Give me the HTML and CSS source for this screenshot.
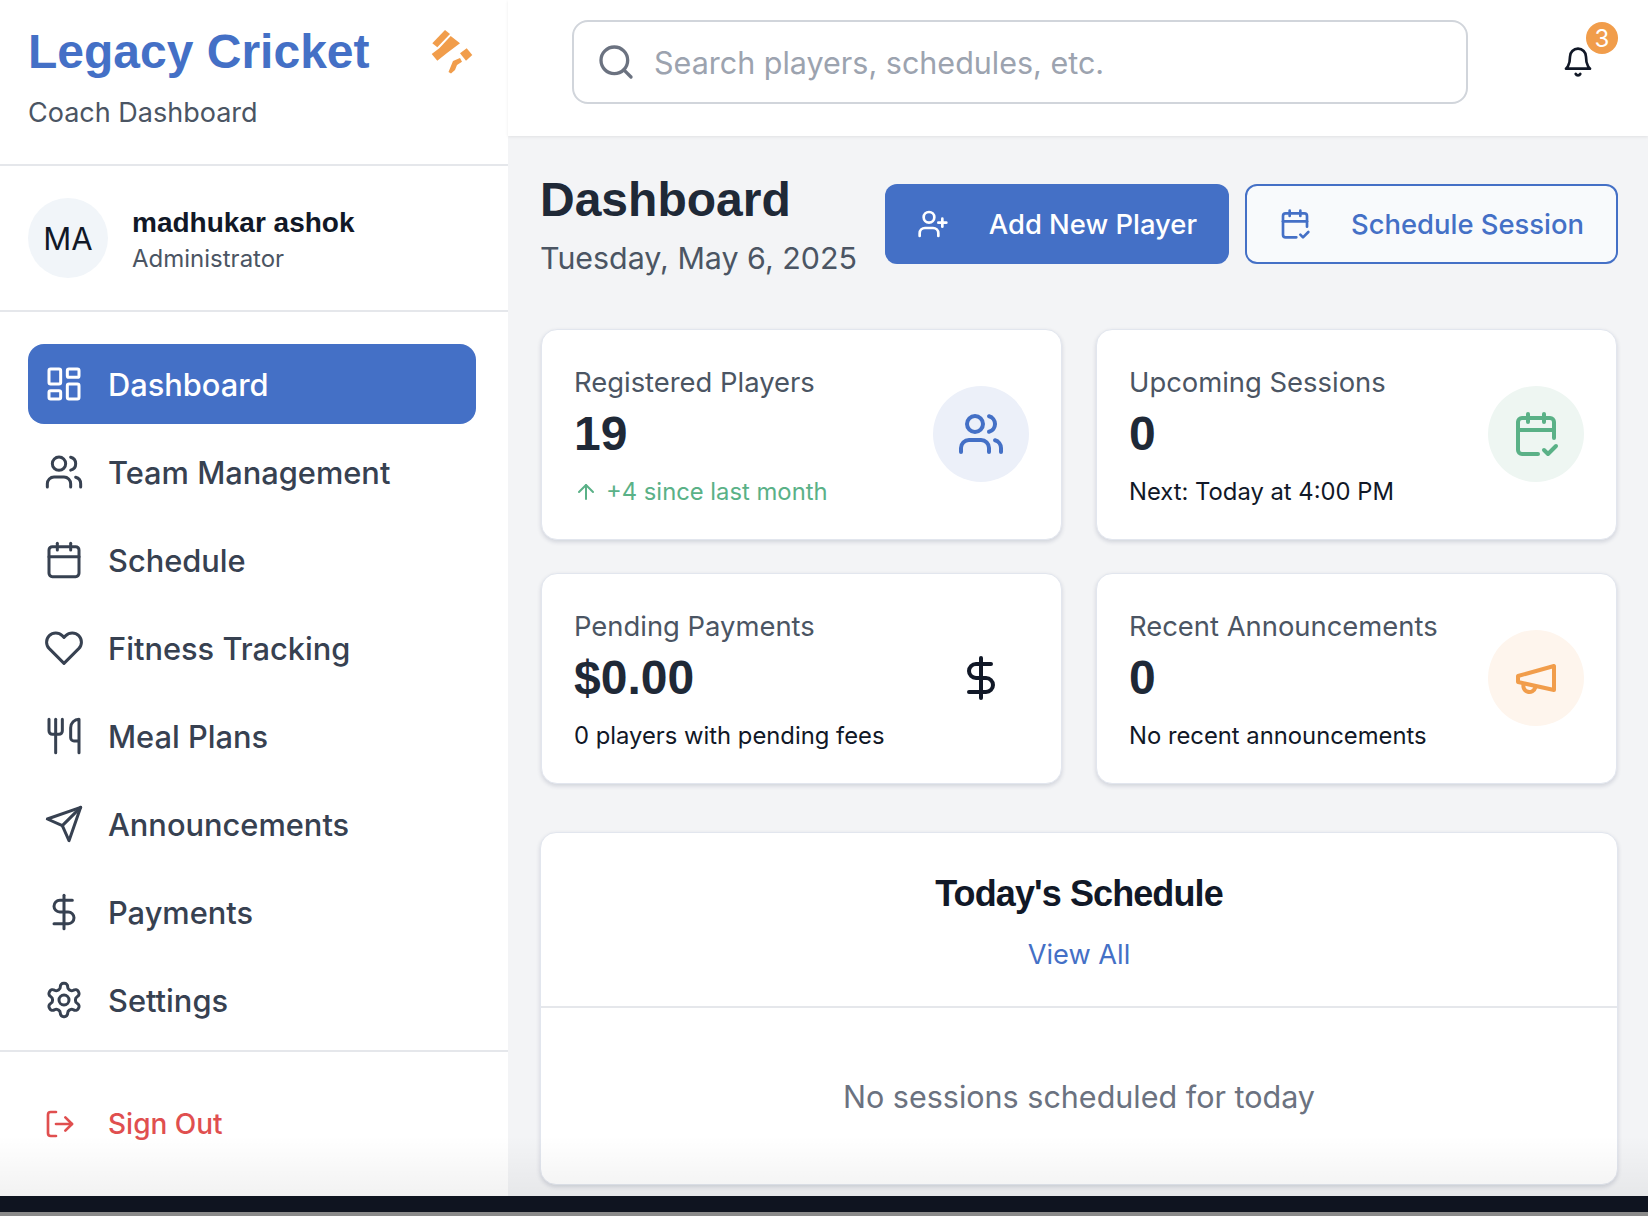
FILE: index.html

```html
<!DOCTYPE html>
<html lang="en">
<head>
  <meta charset="UTF-8" />
  <meta name="viewport" content="width=device-width, initial-scale=1.0" />
  <title>Legacy Cricket - Coach Dashboard</title>
  <link rel="stylesheet" href="styles.css">
</head>
<body>
  <div class="app">
    <aside class="sidebar">
      <div class="brand">
        <div>
          <div class="brand-name">Legacy Cricket</div>
          <div class="brand-sub">Coach Dashboard</div>
        </div>
        <svg class="brand-logo" viewBox="21 10 42 44">
          <path d="M22.300 23.300 35 10 40 14 27.300 27.300Z"/>
          <path d="M21.700 34 29.300 28.300 40.700 16 50 23.300 36.700 33.300 27.300 40.700Z"/>
          <path d="M50 33.300 56.700 28.300 62.300 35 56 40.700Z"/>
          <path d="M38.500 52 43 41 50 38 52 41.700 47 45 45 50 41 53.500Z"/>
        </svg>
      </div>
      <div class="profile">
        <div class="avatar">MA</div>
        <div class="profile-text">
          <div class="profile-name">madhukar ashok</div>
          <div class="profile-role">Administrator</div>
        </div>
      </div>
      <nav class="nav">
        <a class="nav-item active">
          <svg class="icon-nav" viewBox="0 0 24 24"><rect x="3" y="3" width="7" height="9" rx="1"/><rect x="14" y="3" width="7" height="5" rx="1"/><rect x="14" y="12" width="7" height="9" rx="1"/><rect x="3" y="16" width="7" height="5" rx="1"/></svg>
          Dashboard
        </a>
        <a class="nav-item">
          <svg class="icon-nav" viewBox="0 0 24 24"><path d="M16 21v-2a4 4 0 0 0-4-4H6a4 4 0 0 0-4 4v2"/><circle cx="9" cy="7" r="4"/><path d="M22 21v-2a4 4 0 0 0-3-3.870"/><path d="M16 3.130a4 4 0 0 1 0 7.750"/></svg>
          Team Management
        </a>
        <a class="nav-item">
          <svg class="icon-nav" viewBox="0 0 24 24"><rect x="3" y="4" width="18" height="18" rx="2"/><path d="M16 2v4"/><path d="M8 2v4"/><path d="M3 10h18"/></svg>
          Schedule
        </a>
        <a class="nav-item">
          <svg class="icon-nav" viewBox="0 0 24 24"><path d="M20.840 4.610a5.500 5.500 0 0 0-7.780 0L12 5.670l-1.060-1.060a5.500 5.500 0 0 0-7.780 7.780l1.060 1.060L12 21.230l7.780-7.780 1.060-1.060a5.500 5.500 0 0 0 0-7.780z"/></svg>
          Fitness Tracking
        </a>
        <a class="nav-item">
          <svg class="icon-nav" viewBox="0 0 24 24"><path d="M3 2v7c0 1.100.9 2 2 2h4a2 2 0 0 0 2-2V2"/><path d="M7 2v20"/><path d="M21 15V2a5 5 0 0 0-5 5v6c0 1.100.9 2 2 2h3Zm0 0v7"/></svg>
          Meal Plans
        </a>
        <a class="nav-item">
          <svg class="icon-nav" viewBox="0 0 24 24"><path d="m22 2-7 20-4-9-9-4Z"/><path d="M22 2 11 13"/></svg>
          Announcements
        </a>
        <a class="nav-item">
          <svg class="icon-nav" viewBox="0 0 24 24"><path d="M12 2v20"/><path d="M17 5H9.500a3.500 3.500 0 0 0 0 7h5a3.500 3.500 0 0 1 0 7H6"/></svg>
          Payments
        </a>
        <a class="nav-item">
          <svg class="icon-nav" viewBox="0 0 24 24"><path d="M12.220 2h-.44a2 2 0 0 0-2 2v.18a2 2 0 0 1-1 1.730l-.43.25a2 2 0 0 1-2 0l-.15-.08a2 2 0 0 0-2.730.73l-.22.38a2 2 0 0 0 .73 2.730l.15.1a2 2 0 0 1 1 1.720v.51a2 2 0 0 1-1 1.740l-.15.09a2 2 0 0 0-.73 2.730l.22.38a2 2 0 0 0 2.730.73l.15-.08a2 2 0 0 1 2 0l.43.25a2 2 0 0 1 1 1.730V20a2 2 0 0 0 2 2h.44a2 2 0 0 0 2-2v-.18a2 2 0 0 1 1-1.730l.43-.25a2 2 0 0 1 2 0l.15.08a2 2 0 0 0 2.730-.73l.22-.39a2 2 0 0 0-.73-2.730l-.15-.08a2 2 0 0 1-1-1.740v-.5a2 2 0 0 1 1-1.740l.15-.09a2 2 0 0 0 .73-2.730l-.22-.38a2 2 0 0 0-2.730-.73l-.15.08a2 2 0 0 1-2 0l-.43-.25a2 2 0 0 1-1-1.730V4a2 2 0 0 0-2-2z"/><circle cx="12" cy="12" r="3"/></svg>
          Settings
        </a>
      </nav>
      <div class="signout">
        <svg class="icon" viewBox="0 0 24 24"><path d="M9 21H5a2 2 0 0 1-2-2V5a2 2 0 0 1 2-2h4"/><path d="m16 17 5-5-5-5"/><path d="M21 12H9"/></svg>
        Sign Out
      </div>
    </aside>

    <div class="main">
      <header class="topbar">
        <div class="search">
          <svg class="search-icon" viewBox="0 0 24 24"><circle cx="11" cy="11" r="8"/><path d="m21 21-4.300-4.300"/></svg>
          <input type="text" placeholder="Search players, schedules, etc." />
        </div>
        <div class="bell">
          <svg class="icon" viewBox="0 0 24 24"><path d="M6 8a6 6 0 0 1 12 0c0 7 3 9 3 9H3s3-2 3-9"/><path d="M10.300 21a1.940 1.940 0 0 0 3.400 0"/></svg>
          <span class="badge">3</span>
        </div>
      </header>

      <main class="content">
        <div class="page-head">
          <div>
            <h1>Dashboard</h1>
            <div class="date">Tuesday, May 6, 2025</div>
          </div>
          <div class="actions">
            <button class="btn btn-primary">
              <svg class="icon" viewBox="0 0 24 24"><path d="M16 21v-2a4 4 0 0 0-4-4H6a4 4 0 0 0-4 4v2"/><circle cx="9" cy="7" r="4"/><path d="M19 8v6"/><path d="M22 11h-6"/></svg>
              Add New Player
            </button>
            <button class="btn btn-outline">
              <svg class="icon" viewBox="0 0 24 24"><path d="M8 2v4"/><path d="M16 2v4"/><path d="M21 14V6a2 2 0 0 0-2-2H5a2 2 0 0 0-2 2v14a2 2 0 0 0 2 2h8"/><path d="M3 10h18"/><path d="m16 20 2 2 4-4"/></svg>
              Schedule Session
            </button>
          </div>
        </div>

        <div class="stats">
          <div class="card stat">
            <div class="stat-text">
              <div class="stat-label">Registered Players</div>
              <div class="stat-value">19</div>
              <div class="stat-note up">
                <svg class="icon-xs" viewBox="0 0 24 24"><path d="m5 12 7-7 7 7"/><path d="M12 19V5"/></svg>
                +4 since last month
              </div>
            </div>
            <div class="stat-icon blue">
              <svg class="icon-lg" viewBox="0 0 24 24"><path d="M16 21v-2a4 4 0 0 0-4-4H6a4 4 0 0 0-4 4v2"/><circle cx="9" cy="7" r="4"/><path d="M22 21v-2a4 4 0 0 0-3-3.870"/><path d="M16 3.130a4 4 0 0 1 0 7.750"/></svg>
            </div>
          </div>
          <div class="card stat">
            <div class="stat-text">
              <div class="stat-label">Upcoming Sessions</div>
              <div class="stat-value">0</div>
              <div class="stat-note">Next: Today at 4:00 PM</div>
            </div>
            <div class="stat-icon green">
              <svg class="icon-lg" viewBox="0 0 24 24"><path d="M8 2v4"/><path d="M16 2v4"/><path d="M21 14V6a2 2 0 0 0-2-2H5a2 2 0 0 0-2 2v14a2 2 0 0 0 2 2h8"/><path d="M3 10h18"/><path d="m16 20 2 2 4-4"/></svg>
            </div>
          </div>
          <div class="card stat">
            <div class="stat-text">
              <div class="stat-label">Pending Payments</div>
              <div class="stat-value">$0.00</div>
              <div class="stat-note">0 players with pending fees</div>
            </div>
            <div class="stat-icon">
              <svg class="icon-lg" viewBox="0 0 24 24"><path d="M12 2v20"/><path d="M17 5H9.500a3.500 3.500 0 0 0 0 7h5a3.500 3.500 0 0 1 0 7H6"/></svg>
            </div>
          </div>
          <div class="card stat">
            <div class="stat-text">
              <div class="stat-label">Recent Announcements</div>
              <div class="stat-value">0</div>
              <div class="stat-note">No recent announcements</div>
            </div>
            <div class="stat-icon orange">
              <svg class="icon-lg" viewBox="0 0 24 24"><path d="m3 11 18-5v12L3 14v-3z"/><path d="M11.600 16.800a3 3 0 1 1-5.800-1.600"/></svg>
            </div>
          </div>
        </div>

        <section class="card schedule">
          <div class="schedule-head">
            <h2>Today's Schedule</h2>
            <a class="view-all">View All</a>
          </div>
          <div class="schedule-empty">No sessions scheduled for today</div>
        </section>
      </main>
    </div>

    <div class="fade"></div>
  </div>
  <div class="bottom-bar"></div>
</body>
</html>
```

FILE: styles.css

```css
* { box-sizing: border-box; }
html, body { height: 100%; }
body { margin: 0; font-family: Inter, "Liberation Sans", sans-serif; color: #111827; background: #8a8a8a; overflow: hidden; }
svg { fill: none; stroke: currentColor; stroke-width: 2; stroke-linecap: round; stroke-linejoin: round; flex-shrink: 0; }
.icon { width: 32px; height: 32px; }
.icon-nav { width: 40px; height: 40px; stroke-width: 1.8; }
.icon-xs { width: 24px; height: 24px; }
.icon-lg { width: 48px; height: 48px; }

.app { position: relative; display: grid; grid-template-columns: 508px 1fr; height: 1196px; overflow: hidden; }
.fade { position: absolute; left: 0; right: 0; bottom: 0; height: 60px; background: linear-gradient(rgba(0,0,0,0), rgba(0,0,0,0.05)); pointer-events: none; }
.bottom-bar { height: 16px; background: #0f1420; }

.sidebar { background: #fff; display: flex; flex-direction: column; }
.brand { height: 166px; padding: 24px 35px 0 28px; display: flex; justify-content: space-between; align-items: flex-start; border-bottom: 2px solid #e5e7eb; }
.brand-name { font: 700 48px/56px "Liberation Sans", sans-serif; color: #4470c6; white-space: nowrap; }
.brand-sub { margin-top: 13px; font-size: 27px; line-height: 40px; color: #4b5563; }
.brand-logo { width: 42px; height: 44px; margin-top: 6px; stroke: none; fill: #f19d4b; }
.profile { height: 146px; padding: 0 28px; display: flex; align-items: center; gap: 24px; border-bottom: 2px solid #e5e7eb; }
.avatar { width: 80px; height: 80px; border-radius: 50%; background: #f1f5f9; display: flex; align-items: center; justify-content: center; font-size: 31px; }
.profile-text { padding-top: 3px; }
.profile-name { font: 700 28px/38px "Liberation Sans", sans-serif; }
.profile-role { margin-top: 1px; font-size: 24px; line-height: 32px; color: #4b5563; }
.nav { height: 740px; padding: 32px 32px 0 28px; display: flex; flex-direction: column; gap: 8px; border-bottom: 2px solid #e5e7eb; }
.nav-item { height: 80px; padding: 0 16px; display: flex; align-items: center; gap: 24px; border-radius: 16px; font-size: 30.8px; font-weight: 500; color: #374151; }
.nav-item.active { background: #4470c6; color: #fff; }
.signout { margin-top: 32px; height: 80px; padding: 0 44px; display: flex; align-items: center; gap: 32px; font-size: 28px; font-weight: 500; color: #e04f4f; }

.main { background: #f3f4f6; min-width: 0; }
.topbar { height: 136px; background: #fff; padding: 20px 30px 0 64px; display: flex; justify-content: space-between; align-items: flex-start; box-shadow: 0 1px 3px rgba(0,0,0,0.08); }
.search { width: 896px; height: 84px; padding: 0 22px; display: flex; align-items: center; gap: 18px; border: 2px solid #d1d5db; border-radius: 16px; color: #6b7280; }
.search-icon { width: 40px; height: 40px; }
.search input { flex: 1; border: 0; padding: 0; outline: 0; background: none; font: 400 30.5px Inter, sans-serif; }
.search input::placeholder { color: #9ca3af; }
.bell { position: relative; margin-top: 26px; padding-right: 24px; }
.bell .icon { display: block; }
.badge { position: absolute; top: -24px; right: 0; width: 32px; height: 32px; border-radius: 50%; background: #f19d4b; color: #fff; font-size: 24px; display: flex; align-items: center; justify-content: center; }

.content { padding: 32px 30px 32px 32px; }
.page-head { height: 161px; display: flex; justify-content: space-between; align-items: flex-start; }
h1 { margin: 0; padding-top: 4px; font: 700 48px/56px "Liberation Sans", sans-serif; color: #1f2937; }
.date { margin-top: 8px; font-size: 30.4px; line-height: 44px; color: #4b5563; white-space: nowrap; }
.actions { display: flex; gap: 16px; margin-top: 16px; }
.btn { height: 80px; padding: 0 32px; display: flex; align-items: center; gap: 40px; border-radius: 12px; font: 500 27.4px Inter, sans-serif; white-space: nowrap; }
.btn-primary { background: #4470c6; color: #fff; border: 0; }
.btn-outline { background: #f8fafc; color: #4470c6; border: 2px solid #4470c6; }

.card { background: #fff; border: 1px solid #e2e6ee; border-radius: 16px; box-shadow: 0 2px 4px rgba(30,41,80,0.16); }
.stats { padding: 0 1px; display: grid; grid-template-columns: 1fr 1fr; column-gap: 34px; row-gap: 33px; }
.stat { height: 211px; padding: 32px; display: flex; justify-content: space-between; align-items: center; }
.stat-text { padding-top: 4px; }
.stat-label { font-size: 27.4px; line-height: 36px; color: #4b5563; }
.stat-value { margin-top: 2px; font: 700 48px/64px "Liberation Sans", sans-serif; color: #1f2937; }
.stat-note { margin-top: 8px; display: flex; align-items: center; gap: 8px; font-size: 23.8px; line-height: 36px; }
.stat-note.up { color: #5ab187; }
.stat-icon { width: 96px; height: 96px; margin-top: -2px; border-radius: 50%; display: flex; align-items: center; justify-content: center; }
.blue { background: #ecf0f9; color: #4470c6; }
.green { background: #eef6f2; color: #5ab187; }
.orange { background: #fef5ed; color: #f19d4b; }

.schedule { margin-top: 48px; height: 353px; }
.schedule-head { height: 175px; padding-top: 37px; text-align: center; border-bottom: 2px solid #e5e7eb; }
h2 { margin: 0; font: 700 36px/48px "Liberation Sans", sans-serif; letter-spacing: -0.9px; }
.view-all { display: block; margin-top: 19px; font-size: 27.2px; line-height: 36px; color: #4470c6; }
.schedule-empty { padding-top: 67px; text-align: center; font-size: 30.5px; line-height: 44px; color: #6b7280; }
```
